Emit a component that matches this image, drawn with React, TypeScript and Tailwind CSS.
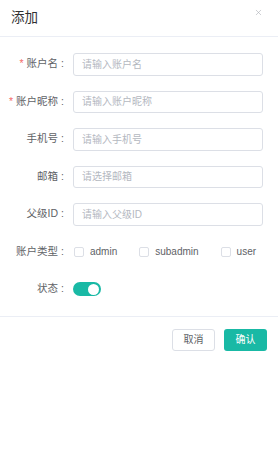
import { X } from "lucide-react";

const fields = [
  { label: "账户名", placeholder: "请输入账户名", required: true },
  { label: "账户昵称", placeholder: "请输入账户昵称", required: true },
  { label: "手机号", placeholder: "请输入手机号" },
  { label: "邮箱", placeholder: "请选择邮箱" },
  { label: "父级ID", placeholder: "请输入父级ID" },
];

function Label({ text, required }: { text: string; required?: boolean }) {
  return (
    <div className="w-[73px] shrink-0 pr-[9px] text-right text-[10.5px] text-[#606266]">
      {required && <span className="mr-[3px] text-[#f56c6c]">*</span>}
      {text}
      <span className="ml-[3px]">:</span>
    </div>
  );
}

export default function App() {
  return (
    <div
      className="w-[278px] h-[471px] bg-white overflow-hidden"
      style={{ fontFamily: '"Liberation Sans", "Noto Sans CJK SC", sans-serif' }}
    >
      {/* header */}
      <div className="h-[37px] flex items-start justify-between pl-[11px] pr-[15px] border-b border-[#ebeef5]">
        <span className="mt-[8px] text-[13.5px] text-[#303133]">添加</span>
        <X className="mt-[8px] h-[9px] w-[9px] text-[#a8abb2]" strokeWidth={1.5} />
      </div>

      {/* form */}
      <div className="pt-[16px] pb-[15px] pr-[15px] flex flex-col gap-[15px] border-b border-[#ebeef5]">
        {fields.map((f) => (
          <div key={f.label} className="flex items-center h-[22.5px]">
            <Label text={f.label} required={f.required} />
            <input
              className="flex-1 min-w-0 h-[22.5px] rounded-[3px] border border-[#dcdfe6] px-[8px] text-[10px] text-[#606266] placeholder:text-[#b4b8bf] outline-none"
              placeholder={f.placeholder}
            />
          </div>
        ))}

        <div className="flex items-center h-[22.5px]">
          <Label text="账户类型" />
          <div className="flex items-center gap-[22px] pl-px text-[10px] text-[#606266]">
            {["admin", "subadmin", "user"].map((t) => (
              <label key={t} className="flex items-center gap-[6px]">
                <span className="h-[10px] w-[10px] rounded-[2px] border border-[#dcdfe6] bg-white" />
                {t}
              </label>
            ))}
          </div>
        </div>

        <div className="flex items-center h-[22.5px]">
          <Label text="状态" />
          <div className="flex items-center h-[14px] w-[28px] rounded-full bg-[#19b9a5] p-[2px] justify-end">
            <span className="h-[11px] w-[11px] rounded-full bg-white" />
          </div>
        </div>
      </div>

      {/* footer */}
      <div className="flex justify-end gap-[9px] pt-[12px] pr-[11px]">
        <button className="h-[22px] w-[43px] rounded-[3px] border border-[#dcdfe6] bg-white text-[10px] text-[#606266]">
          取消
        </button>
        <button className="h-[22px] w-[43px] rounded-[3px] bg-[#19b9a5] text-[10px] text-white">
          确认
        </button>
      </div>
    </div>
  );
}
